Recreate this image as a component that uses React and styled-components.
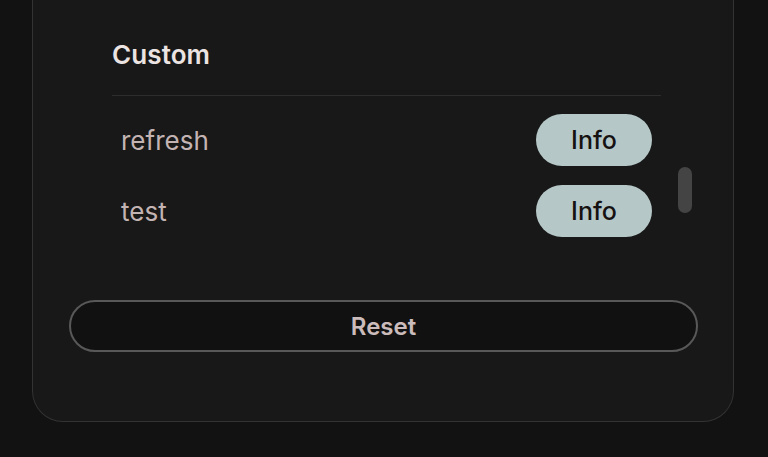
import React from 'react'
import styled, { createGlobalStyle } from 'styled-components'

const GlobalStyle = createGlobalStyle`
  html, body {
    margin: 0;
    padding: 0;
    background: #121212;
    font-family: Inter, "Noto Sans", "Liberation Sans", sans-serif;
  }
`

const Page = styled.div`
  height: 457px;
  overflow: hidden;
  padding-left: 32px;
`

const Card = styled.div`
  width: 700px;
  height: 421px;
  background: #181818;
  border: 1px solid #333;
  border-top: none;
  border-radius: 0 0 31px 31px;
  display: flex;
  flex-direction: column;
`

const Section = styled.div`
  display: flex;
  padding-left: 79px;
`

const Content = styled.div`
  width: 549px;
`

const Heading = styled.div`
  padding: 39px 0 24px;
  font-size: 26px;
  font-weight: 600;
  line-height: 32px;
  letter-spacing: 0.1px;
  color: #ece4e2;
`

const Divider = styled.div`
  height: 1px;
  background: #2d2d2d;
`

const List = styled.div`
  display: flex;
  flex-direction: column;
  gap: 19px;
  padding: 18px 9px 0 9px;
`

const Row = styled.div`
  display: flex;
  align-items: center;
  justify-content: space-between;
  height: 52px;
`

const Label = styled.span`
  font-size: 26px;
  color: #c3b4b3;
`

const InfoButton = styled.button`
  width: 116px;
  height: 52px;
  border: none;
  border-radius: 26px;
  background: #b5c7c6;
  color: #161212;
  font-family: inherit;
  font-size: 25px;
  font-weight: 500;
  cursor: pointer;
`

const ScrollTrack = styled.div`
  margin-left: 17px;
  padding-top: 167px;
`

const Thumb = styled.div`
  width: 14px;
  height: 46px;
  border-radius: 7px;
  background: #444;
`

const ResetButton = styled.button`
  margin: 63px 0 0 36px;
  width: 629px;
  height: 52px;
  border: 2px solid #585858;
  border-radius: 26px;
  background: #111;
  color: #cbbcbb;
  font-family: inherit;
  font-size: 24px;
  font-weight: 600;
  cursor: pointer;
`

const commands = ['refresh', 'test']

export default function App() {
  return (
    <>
      <GlobalStyle />
      <Page>
        <Card>
          <Section>
            <Content>
              <Heading>Custom</Heading>
              <Divider />
              <List>
                {commands.map((c) => (
                  <Row key={c}>
                    <Label>{c}</Label>
                    <InfoButton>Info</InfoButton>
                  </Row>
                ))}
              </List>
            </Content>
            <ScrollTrack>
              <Thumb />
            </ScrollTrack>
          </Section>
          <ResetButton>Reset</ResetButton>
        </Card>
      </Page>
    </>
  )
}
